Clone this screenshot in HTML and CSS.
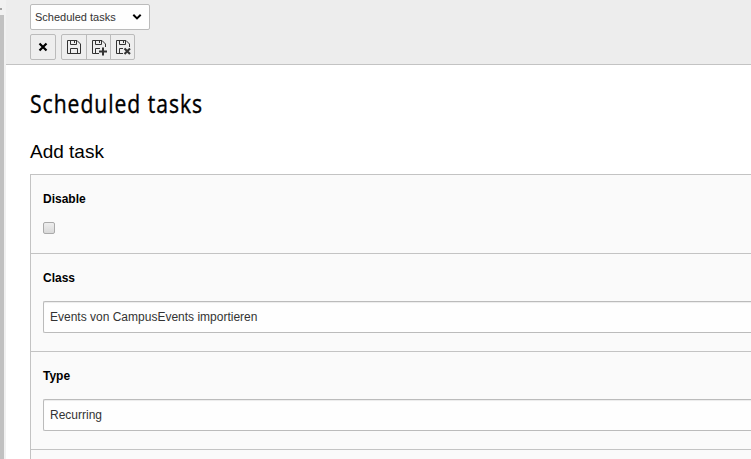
FILE: index.html
```html
<!DOCTYPE html>
<html lang="en">
<head>
<meta charset="utf-8">
<title>Scheduled tasks</title>
<link rel="stylesheet" href="styles.css">
</head>
<body>
<div class="scrollbar"><span class="arrow"></span><div class="thumb"></div></div>
<div class="module">
  <header class="docheader">
    <div class="menu"><span>Scheduled tasks</span>
      <svg width="10" height="8" viewBox="0 0 10 8"><path d="M1.3 1.7 5 5.4 8.7 1.7" fill="none" stroke="#000" stroke-width="2"/></svg>
    </div>
    <div class="buttons">
      <button class="btn close" aria-label="Close"><svg width="16" height="16" viewBox="0 0 16 16"><path d="M4.5 4.5l7 7m0-7l-7 7" stroke="#000" stroke-width="2.2"/></svg></button>
      <div class="group">
        <button class="btn" aria-label="Save"><svg width="16" height="16" viewBox="0 0 16 16"><path d="M1.5 1.5H11L14.5 5V14.5H1.5ZM4.5 1.5V5.5H10.5V1.5M8.5 2V4M4.5 14.5V9.5H11.5V14.5" fill="none" stroke="#333"/></svg></button>
        <button class="btn" aria-label="Save and create new"><svg width="16" height="16" viewBox="0 0 16 16"><path d="M8 14.5H1.5V1.5H11L14.5 5V8M4.5 1.5V5.5H10.5V1.5M8.5 2V4M4.5 14.5V9.5H9" fill="none" stroke="#333"/><path d="M12 8.5v8M8 12.5h8" stroke="#333" stroke-width="2"/></svg></button>
        <button class="btn" aria-label="Save and close"><svg width="16" height="16" viewBox="0 0 16 16"><path d="M8 14.5H1.5V1.5H11L14.5 5V8M4.5 1.5V5.5H10.5V1.5M8.5 2V4M4.5 14.5V9.5H8" fill="none" stroke="#333"/><path d="M9.5 9.5l5.5 5.5m0-5.5L9.5 15" stroke="#333" stroke-width="2.1"/></svg></button>
      </div>
    </div>
  </header>
  <main>
    <h1>Scheduled tasks</h1>
    <h2>Add task</h2>
    <div class="form">
      <section class="row disable"><label for="off">Disable</label><input id="off" type="checkbox" class="check"></section>
      <section class="row"><label>Class</label><div class="field">Events von CampusEvents importieren</div></section>
      <section class="row"><label>Type</label><div class="field">Recurring</div></section>
      <section class="next"></section>
    </div>
  </main>
</div>
</body>
</html>
```
FILE: styles.css
```css
* { box-sizing: border-box; }
body {
  margin: 0;
  height: 459px;
  display: flex;
  overflow: hidden;
  background: #fff;
  font: 12px/18px "Liberation Sans", Arial, sans-serif;
  color: #000;
}
.scrollbar { width: 6px; height: 459px; flex: none; background: #f1f1f1; display: flow-root; }
.arrow { display: block; width: 2px; height: 2px; margin-top: 8px; background: #a3a3a3; }
.thumb { width: 4px; height: 444px; margin-top: 5px; background: #c1c1c1; }
.module { flex: 1; min-width: 0; }
.docheader {
  height: 65px;
  padding: 4px 24px 0;
  background: #ededed;
  border-bottom: 1px solid #c3c3c3;
}
.menu {
  display: flex;
  align-items: center;
  justify-content: space-between;
  width: 120px;
  height: 26px;
  padding: 0 7px 0 4px;
  border: 1px solid #bbb;
  border-radius: 2px;
  background: #fefefe;
  font-size: 11px;
  color: #333;
}
.buttons { display: flex; gap: 5px; margin-top: 4px; }
.group { display: flex; }
.btn {
  display: flex;
  align-items: center;
  justify-content: center;
  width: 26px;
  height: 26px;
  padding: 0;
  border: 1px solid #bbb;
  border-radius: 2px;
  background: #eee;
}
.btn svg { overflow: visible; flex: none; }
.group .btn + .btn { width: 25px; margin-left: -1px; border-radius: 0; }
.group .btn:first-child { border-radius: 2px 0 0 2px; }
.group .btn:last-child { border-radius: 0 2px 2px 0; }
main { padding: 21px 0 0 24px; }
h1 {
  width: max-content;
  margin: 0;
  font: 400 26px/34px "Open Sans", sans-serif;
  letter-spacing: 1.2px;
  -webkit-text-stroke: .4px #000;
  transform: scaleX(.812);
  transform-origin: left;
}
h2 { margin: 19px 0 0; font-size: 19px; font-weight: 400; line-height: 26px; }
.form { margin-top: 9px; border: solid #c3c3c3; border-width: 1px 0 0 1px; background: #fafafa; }
.row { height: 98px; padding: 15px 0 0 12px; border-bottom: 1px solid #c3c3c3; }
.disable { height: 79px; }
.next { height: 9px; }
label { display: block; font-weight: 700; }
.check {
  appearance: none;
  display: block;
  width: 12px;
  height: 12px;
  margin: 14px 0 0;
  border: 1px solid #aaa;
  border-radius: 2px;
  background: linear-gradient(#eee, #d9d9d9);
}
.field {
  height: 32px;
  margin-top: 14px;
  padding: 6px;
  border: 1px solid #bbb;
  border-right: 0;
  border-radius: 2px 0 0 2px;
  background: #fefefe;
  box-shadow: inset 0 1px 1px rgba(0,0,0,.075);
  color: #333;
}
```
